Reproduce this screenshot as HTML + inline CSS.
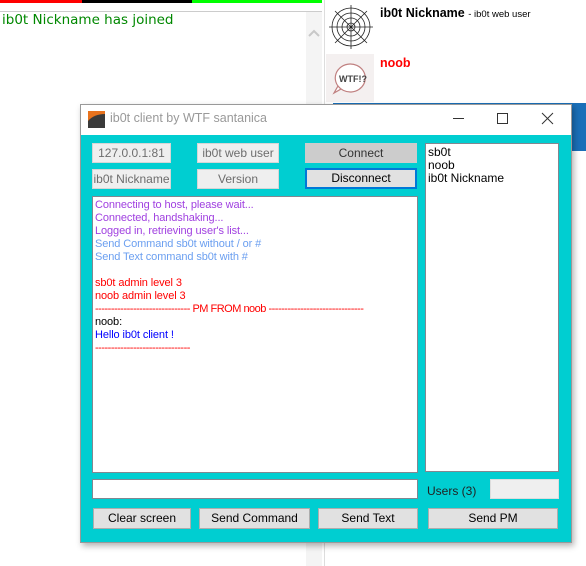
<!DOCTYPE html>
<html><head><meta charset="utf-8"><style>
*{box-sizing:border-box;margin:0;padding:0}
body{width:586px;height:566px;position:relative;background:#fff;font-family:"Liberation Sans",sans-serif;overflow:hidden}
.a{position:absolute}
.btn{position:absolute;background:#e1e1e1;border:1px solid #adadad;font-size:12px;color:#000;text-align:center;line-height:18px}
.dis{background:#efefef;border:1px solid #d6d6d6;color:#6d6d6d}
.box{position:absolute;background:#fff;border:1px solid #828790}
.log div{font-size:11px;line-height:13px;white-space:nowrap;letter-spacing:-0.1px}
</style></head><body>
<div class="a" style="left:0;top:0;width:82px;height:3px;background:#f00"></div>
<div class="a" style="left:82px;top:0;width:110px;height:3px;background:#000"></div>
<div class="a" style="left:192px;top:0;width:130px;height:3px;background:#0f0"></div>
<div class="a" style="left:0;top:11px;width:322px;height:1px;background:#ccc"></div>
<div class="a" style="left:306px;top:12px;width:16px;height:554px;background:#f4f4f4"></div>
<svg class="a" style="left:307px;top:28px" width="14" height="10"><path d="M2 8L7 3L12 8" fill="none" stroke="#c8c8c8" stroke-width="2"/></svg>
<div class="a" style="left:324px;top:0;width:1px;height:566px;background:#ddd"></div>
<div class="a" style="left:2px;top:12px;font-family:'DejaVu Sans',sans-serif;font-size:13.5px;color:#080">ib0t Nickname has joined</div>
<svg class="a" style="left:327px;top:4px" width="48" height="46" viewBox="0 0 48 46"><g fill="none" stroke="#222" stroke-width="0.8"><circle cx="24" cy="23" r="4"/><circle cx="24" cy="23" r="9"/><circle cx="24" cy="23" r="14"/><circle cx="24" cy="23" r="19"/><path d="M24 1V45M2 23H46M8 7L40 39M40 7L8 39"/></g></svg>
<div class="a" style="left:326px;top:54px;width:48px;height:48px;background:#f4f0f0"></div>
<svg class="a" style="left:330px;top:60px" width="40" height="38"><path d="M20 4a15 14 0 1 1-12 22l-4 7 7-4A15 14 0 0 1 20 4z" fill="#fff" stroke="#c08080" stroke-width="1.2"/><text x="9" y="22" font-size="9" font-weight="bold" fill="#444" font-family="Liberation Sans">WTF!?</text></svg>
<div class="a" style="left:380px;top:6px;font-size:12.5px;font-weight:bold">ib0t Nickname <span style="font-weight:normal;font-size:9.5px">- ib0t web user</span></div>
<div class="a" style="left:380px;top:56px;font-size:12.5px;font-weight:bold;color:#f00">noob</div>
<div class="a" style="left:333px;top:103px;width:253px;height:48px;background:#1a6fb8"></div>
<div class="a" style="left:80px;top:104px;width:492px;height:439px;background:#00ced1;box-shadow:2px 3px 6px rgba(0,0,0,.3);border:1px solid #999"></div>
<div class="a" style="left:80px;top:104px;width:492px;height:31px;background:#fff;border:1px solid #999;border-bottom:none"></div>
<svg class="a" style="left:88px;top:111px" width="17" height="17"><rect width="17" height="17" fill="#e8731e"/><path d="M0 17V10Q6 3 17 3V17Z" fill="#3a3a3a"/></svg>
<div class="a" style="left:110px;top:111px;font-size:12.5px;color:#999">ib0t client by WTF santanica</div>
<div class="a" style="left:453px;top:118px;width:11px;height:1px;background:#333"></div>
<div class="a" style="left:497px;top:113px;width:11px;height:11px;border:1px solid #333"></div>
<svg class="a" style="left:541px;top:112px" width="13" height="13"><path d="M1 1L12 12M12 1L1 12" stroke="#333" stroke-width="1"/></svg>
<div class="btn dis" style="left:92px;top:143px;width:79px;height:20px">127.0.0.1:81</div>
<div class="btn dis" style="left:197px;top:143px;width:82px;height:20px">ib0t web user</div>
<div class="btn" style="left:305px;top:143px;width:112px;height:20px;background:#ccc;border-color:#ccc;color:#333">Connect</div>
<div class="btn dis" style="left:92px;top:169px;width:79px;height:20px">ib0t Nickname</div>
<div class="btn dis" style="left:197px;top:169px;width:82px;height:20px">Version</div>
<div class="btn" style="left:305px;top:168px;width:112px;height:21px;border:2px solid #0078d7;line-height:17px">Disconnect</div>
<div class="box" style="left:425px;top:143px;width:134px;height:329px;padding:2px"><div style="font-size:12px;line-height:13px">sb0t<br>noob<br>ib0t Nickname</div></div>
<div class="box log" style="left:92px;top:196px;width:326px;height:277px;padding:2px 2px">
<div style="color:#a040e0">Connecting to host, please wait...</div>
<div style="color:#a040e0">Connected, handshaking...</div>
<div style="color:#a040e0">Logged in, retrieving user's list...</div>
<div style="color:#6b9ff0">Send Command sb0t without / or #</div>
<div style="color:#6b9ff0">Send Text command sb0t with #</div>
<div>&nbsp;</div>
<div style="color:#f00">sb0t admin level 3</div>
<div style="color:#f00">noob admin level 3</div>
<div style="color:#f00;letter-spacing:-0.5px">------------------------------ PM FROM noob ------------------------------</div>
<div>noob:</div>
<div style="color:#00f">Hello ib0t client !</div>
<div style="color:#f00;letter-spacing:-0.5px">------------------------------</div>
</div>
<div class="box" style="left:92px;top:479px;width:326px;height:20px"></div>
<div class="a" style="left:427px;top:484px;font-size:12px;color:#222">Users (3)</div>
<div class="a" style="left:490px;top:479px;width:69px;height:20px;background:#efefef;border:1px solid #ddd"></div>
<div class="btn" style="left:93px;top:508px;width:98px;height:21px">Clear screen</div>
<div class="btn" style="left:199px;top:508px;width:111px;height:21px">Send Command</div>
<div class="btn" style="left:318px;top:508px;width:100px;height:21px">Send Text</div>
<div class="btn" style="left:428px;top:508px;width:130px;height:21px">Send PM</div>
</body></html>
